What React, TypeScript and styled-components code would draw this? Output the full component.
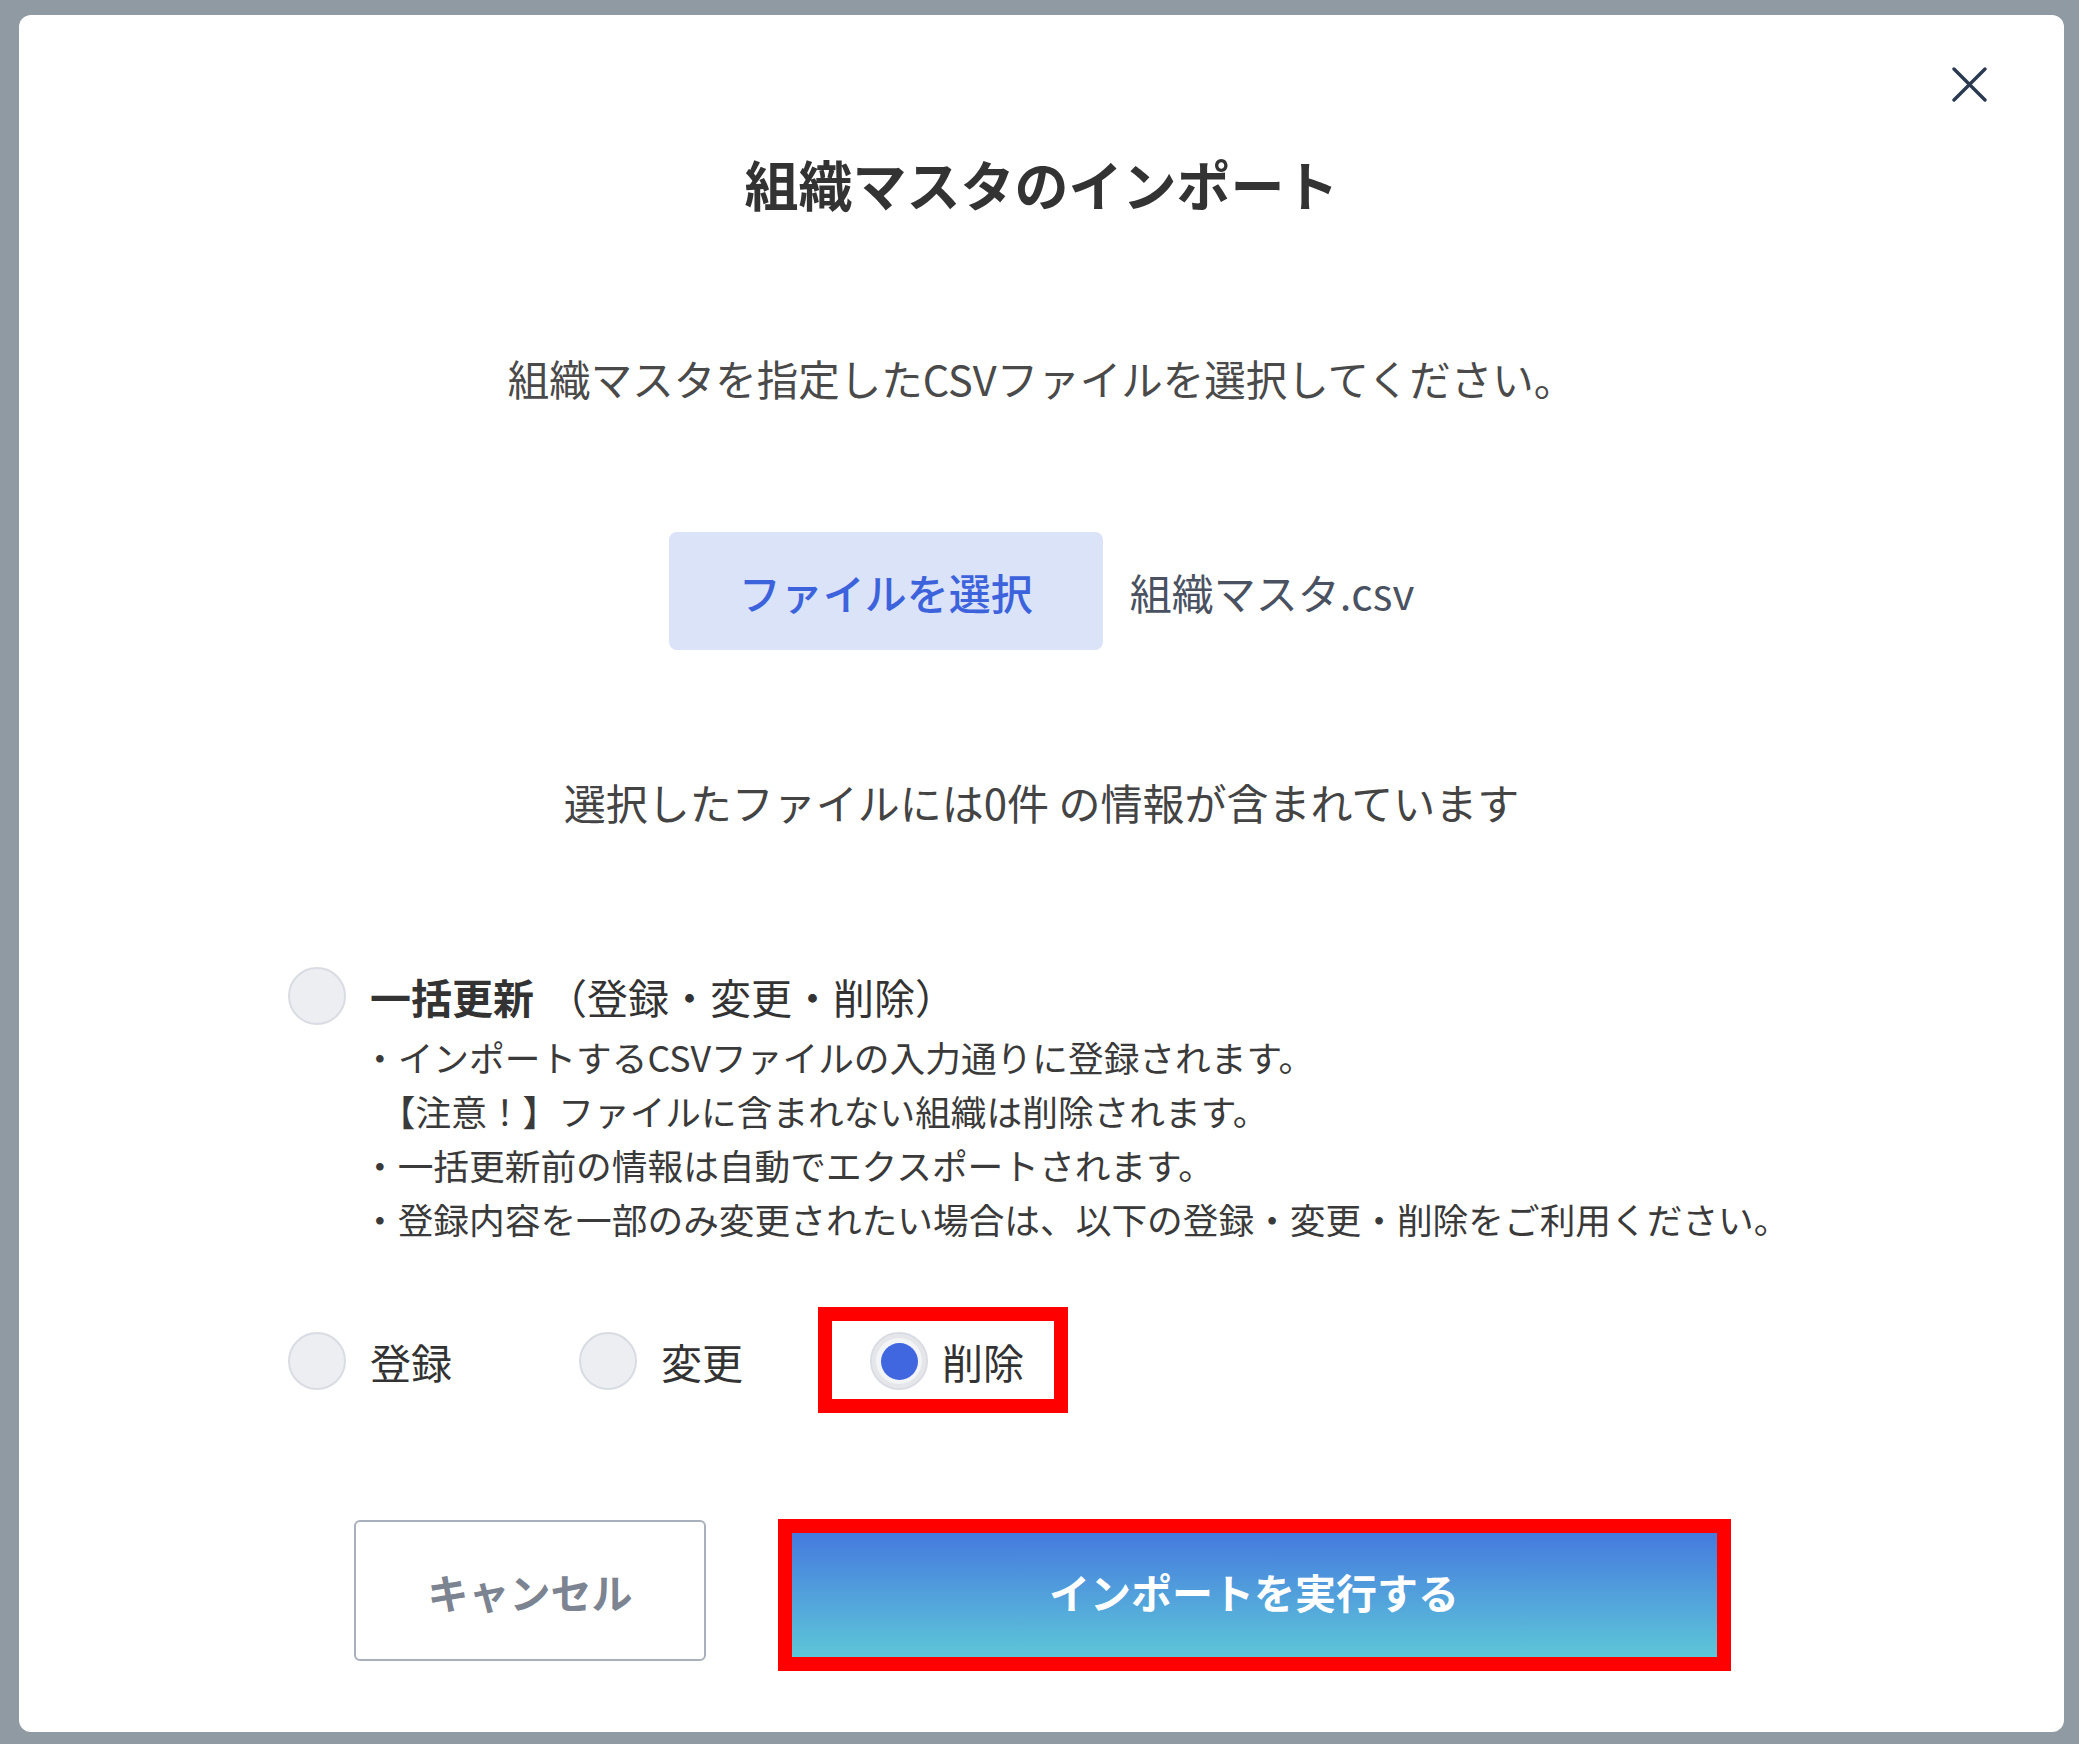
import styled, { createGlobalStyle } from 'styled-components'

const GlobalStyle = createGlobalStyle`
  html, body {
    margin: 0;
    padding: 0;
  }
  body {
    background: #8f9aa2;
    font-family: 'Noto Sans CJK JP', 'Noto Sans', sans-serif;
  }
  * {
    box-sizing: border-box;
  }
`

const notes = [
  '・インポートするCSVファイルの入力通りに登録されます。',
  '　【注意！】ファイルに含まれない組織は削除されます。',
  '・一括更新前の情報は自動でエクスポートされます。',
  '・登録内容を一部のみ変更されたい場合は、以下の登録・変更・削除をご利用ください。',
]

const modes = [
  { label: '登録', checked: false },
  { label: '変更', checked: false },
  { label: '削除', checked: true },
]

export default function App() {
  return (
    <>
      <GlobalStyle />
      <Backdrop>
        <Modal>
          <CloseButton aria-label='閉じる'>
            <svg width='35' height='35' viewBox='0 0 35 35'>
              <path d='M2 2 L33 33 M33 2 L2 33' stroke='#2c3a50' strokeWidth='3.4' strokeLinecap='round' />
            </svg>
          </CloseButton>
          <Title>組織マスタのインポート</Title>
          <Lead>組織マスタを指定したCSVファイルを選択してください。</Lead>
          <FileRow>
            <FileButton>ファイルを選択</FileButton>
            <FileName>組織マスタ.csv</FileName>
          </FileRow>
          <Count>選択したファイルには0件 の情報が含まれています</Count>
          <ModeSection>
            <Option>
              <Radio />
              <OptionLabel>
                <strong>一括更新</strong>
                <Paren>（登録・変更・削除）</Paren>
              </OptionLabel>
            </Option>
            <Notes>
              {notes.map((n) => (
                <li key={n}>{n}</li>
              ))}
            </Notes>
            <OptionRow>
              {modes.map((m) => (
                <Option key={m.label} $tight={m.checked}>
                  <Radio $checked={m.checked} />
                  <OptionLabel>{m.label}</OptionLabel>
                  {m.checked && <Highlight $inset='-25px -44px -23px -52px' />}
                </Option>
              ))}
            </OptionRow>
          </ModeSection>
          <Actions>
            <CancelButton>キャンセル</CancelButton>
            <ImportButton>
              インポートを実行する
              <Highlight $inset='-1px -2px -10px -1px' />
            </ImportButton>
          </Actions>
        </Modal>
      </Backdrop>
    </>
  )
}

const Backdrop = styled.div`
  min-height: 1744px;
  padding: 15px 15px 12px 19px;
`
const Modal = styled.div`
  position: relative;
  width: 2045px;
  height: 1717px;
  padding-top: 138px;
  background: #fff;
  border-radius: 12px;
  display: flex;
  flex-direction: column;
  align-items: center;
`
const CloseButton = styled.button`
  position: absolute;
  top: 52px;
  right: 77px;
  width: 35px;
  height: 35px;
  padding: 0;
  border: none;
  background: none;
  display: flex;
`
const Title = styled.h1`
  margin: 0;
  font-size: 54px;
  line-height: 62px;
  font-weight: 700;
  color: #333;
`
const Lead = styled.p`
  margin: 139px 0 0;
  font-size: 41.5px;
  line-height: 48px;
  color: #4a4a4a;
`
const FileRow = styled.div`
  margin-top: 130px;
  display: flex;
  align-items: center;
  gap: 27px;
`
const FileButton = styled.button`
  width: 434px;
  height: 118px;
  border: none;
  border-radius: 8px;
  background: #dbe3f8;
  color: #3c62dc;
  font-family: inherit;
  font-size: 42px;
  font-weight: 500;
`
const FileName = styled.span`
  font-size: 42px;
  color: #4a5262;
`
const Count = styled.p`
  margin: 128px 0 0;
  font-size: 42px;
  line-height: 48px;
  color: #444;
`
const ModeSection = styled.div`
  align-self: stretch;
  margin-top: 141px;
  padding-left: 269px;
`
const Option = styled.label<{ $tight?: boolean }>`
  position: relative;
  display: flex;
  align-items: center;
  gap: ${(p) => (p.$tight ? '14px' : '24px')};
  height: 58px;
`
const Radio = styled.span<{ $checked?: boolean }>`
  position: relative;
  flex: none;
  width: 58px;
  height: 58px;
  border-radius: 50%;
  border: 2px solid #d9dce2;
  background: ${(p) => (p.$checked ? '#f3f4f6' : '#eceef2')};
  box-shadow: ${(p) => (p.$checked ? 'inset 0 0 0 4px #e4e6ea' : 'none')};
  &::after {
    content: '';
    display: ${(p) => (p.$checked ? 'block' : 'none')};
    position: absolute;
    inset: 8.5px;
    border-radius: 50%;
    background: #4066e0;
  }
`
const OptionLabel = styled.span`
  font-size: 41px;
  color: #333;
  white-space: nowrap;
  strong {
    font-weight: 700;
  }
`
const Paren = styled.span`
  margin-left: 12px;
`
const Notes = styled.ul`
  margin: 5px 0 0;
  padding: 0 0 0 74px;
  list-style: none;
  font-size: 35.7px;
  line-height: 54px;
  color: #3a3a3a;
  white-space: nowrap;
`
const OptionRow = styled.div`
  margin-top: 86px;
  display: flex;
  gap: 127px;
`
const Highlight = styled.span<{ $inset: string }>`
  position: absolute;
  inset: ${(p) => p.$inset};
  border: 14px solid #ff0000;
  pointer-events: none;
`
const Actions = styled.div`
  margin-top: 130px;
  display: flex;
  gap: 73px;
`
const CancelButton = styled.button`
  width: 352px;
  height: 141px;
  border: 2px solid #a9b0bb;
  border-radius: 6px;
  background: #fff;
  color: #7c8391;
  font-family: inherit;
  font-size: 41px;
  font-weight: 700;
`
const ImportButton = styled.button`
  position: relative;
  width: 950px;
  height: 141px;
  border: none;
  background: linear-gradient(180deg, #4372df 0%, #5ec9d8 100%);
  color: #fff;
  font-family: inherit;
  font-size: 41px;
  font-weight: 700;
`
